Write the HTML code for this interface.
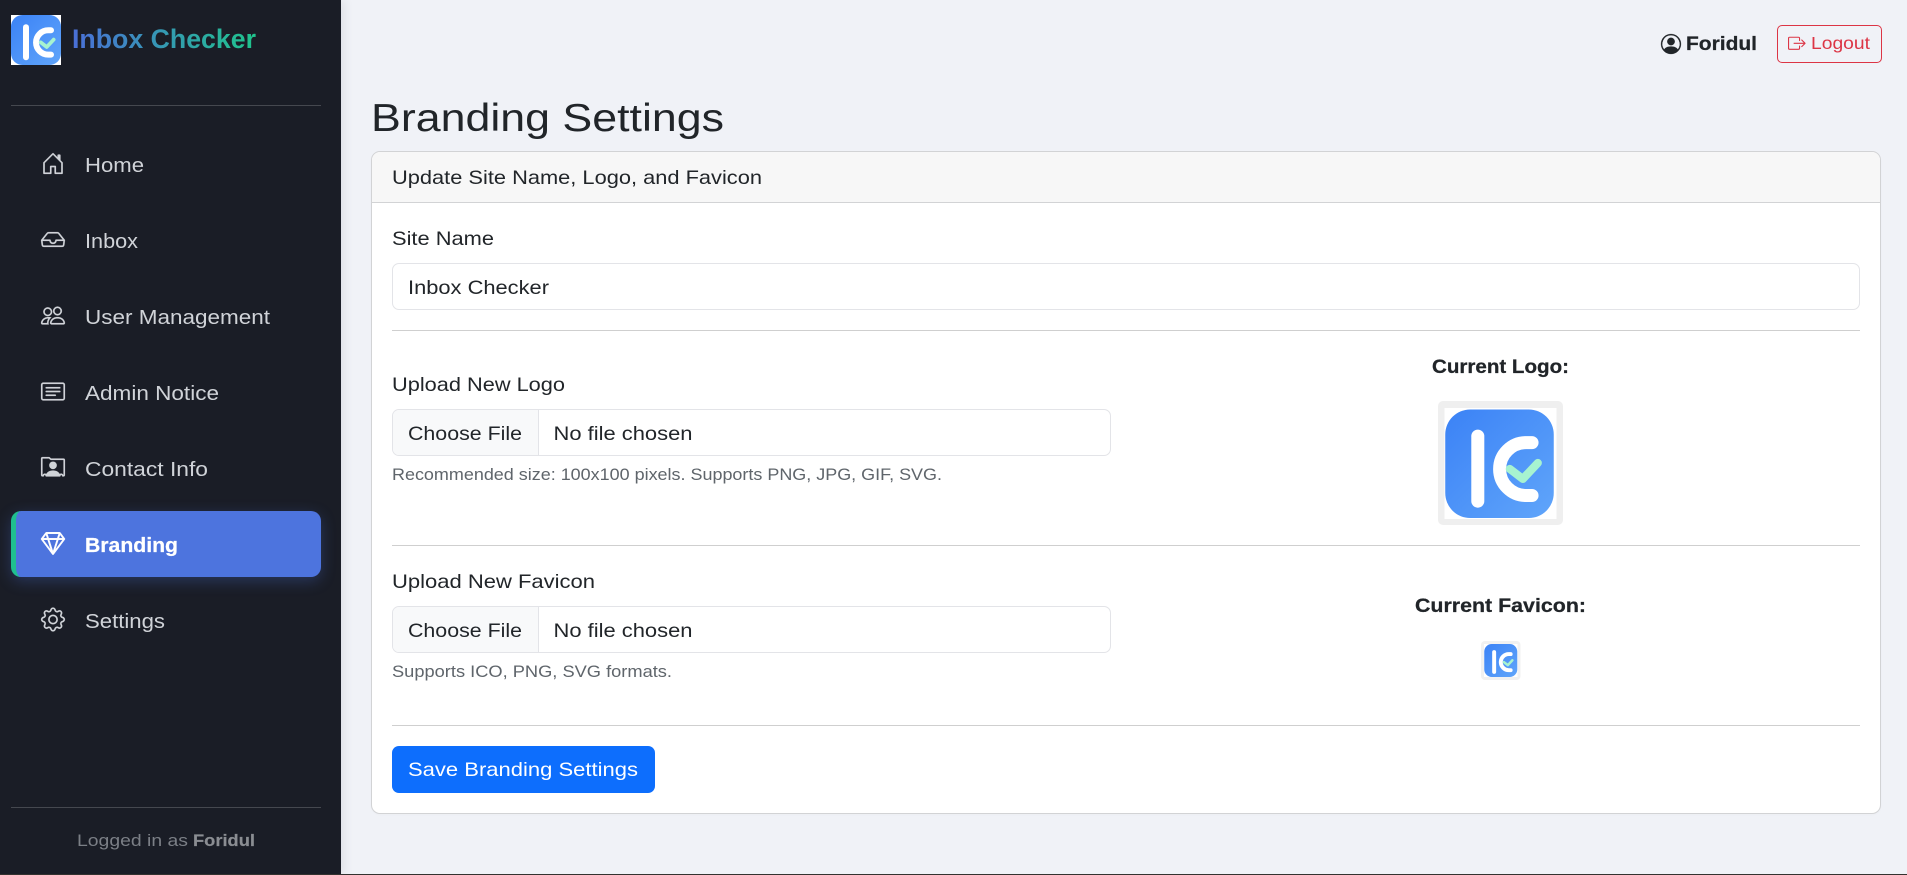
<!DOCTYPE html>
<html lang="en">
<head>
<meta charset="utf-8">
<title>Branding Settings</title>
<style>
html,body{margin:0;padding:0;width:1907px;height:875px;overflow:hidden;background:#f0f2f7;font-family:"Liberation Sans",sans-serif}
div{position:absolute;box-sizing:border-box}
#side{left:0;top:0;width:341px;height:875px;background:#1a1d26;box-shadow:3px 0 10px rgba(0,0,0,.08)}
.sh{left:11px;width:310px;height:1px;background:#45484f}
#active{left:11px;top:511px;width:310px;height:66px;background:#4d74de;border-left:5px solid #1fc08f;border-radius:10px;box-shadow:0 4px 15px rgba(77,116,222,.3)}
#logout{left:1777px;top:25px;width:105px;height:37.5px;border:1px solid #dc3545;border-radius:5px}
#card{left:371px;top:151px;width:1510px;height:663px;background:#fff;border:1px solid #d2d3d5;border-radius:9px;box-shadow:0 1px 2px rgba(0,0,0,.02)}
#chead{left:0;top:0;width:1508px;height:51px;background:#f7f7f7;border-bottom:1px solid #d2d3d5;border-radius:8px 8px 0 0}
.hr{left:392px;width:1468px;height:1px;background:#cfcfcf}
.inp{background:#fff;border:1px solid #e3e4e8;border-radius:7px}
.fb{left:0;top:0;width:146px;height:100%;background:#f8f9fa;border-right:1px solid #e3e4e8;border-radius:6px 0 0 6px}
#save{left:392px;top:746px;width:263px;height:47px;background:#0d6efd;border-radius:7px}
#ln{left:0;top:874px;width:1907px;height:1px;background:#33322f}
svg{position:absolute;left:0;top:0}
text{font-family:"Liberation Sans",sans-serif}
</style>
</head>
<body>
<div id="side"></div>
<div class="sh" style="top:105px"></div>
<div class="sh" style="top:807px"></div>
<div id="active"></div>
<div id="logout"></div>
<div id="card"><div id="chead"></div></div>
<div class="inp" style="left:392px;top:263px;width:1468px;height:47px"></div>
<div class="hr" style="top:330px"></div>
<div class="inp" style="left:392px;top:409px;width:719px;height:47px"><div class="fb"></div></div>
<div class="hr" style="top:545px"></div>
<div class="inp" style="left:392px;top:606px;width:719px;height:47px"><div class="fb"></div></div>
<div class="hr" style="top:725px"></div>
<div id="save"></div>
<div id="ln"></div>

<svg width="1907" height="875" viewBox="0 0 1907 875" xmlns="http://www.w3.org/2000/svg">
<defs>
<linearGradient id="tg" gradientUnits="userSpaceOnUse" x1="72" y1="0" x2="256" y2="0"><stop offset="0" stop-color="#4a6fd8"/><stop offset="1" stop-color="#1fc48c"/></linearGradient>
<linearGradient id="lg" x1="0" y1="0" x2="1" y2="1"><stop offset="0" stop-color="#3b82f6"/><stop offset="1" stop-color="#60a5fa"/></linearGradient>
<symbol id="logo" viewBox="0 0 100 100">
<rect width="100" height="100" rx="23" fill="url(#lg)"/>
<path d="M30 24.500V84.500" stroke="#fff" stroke-width="12" stroke-linecap="round" fill="none"/>
<path d="M80 30.500H74.500A24.400 24.400 0 0 0 74.500 79.300H80" stroke="#fff" stroke-width="12" stroke-linecap="round" fill="none"/>
<path d="M59.500 54.800L71.500 64L85.300 49.300" stroke="#a7f3d0" stroke-width="7.500" stroke-linecap="round" stroke-linejoin="round" fill="none"/>
</symbol>
</defs>

<!-- brand -->
<rect x="11" y="15" width="50" height="50" fill="#fff"/>
<use href="#logo" x="11" y="15" width="50" height="50"/>
<text x="72" y="48" font-size="26.500" font-weight="700" fill="url(#tg)" textLength="184" lengthAdjust="spacingAndGlyphs">Inbox Checker</text>

<!-- nav icons -->
<g fill="#d0d3d8" stroke="#d0d3d8" stroke-width=".12">
<g transform="translate(41,151.500) scale(1.500)"><path d="M8.354 1.146a.5.5 0 0 0-.708 0l-6 6A.5.5 0 0 0 1.500 7.500v7a.5.5 0 0 0 .5.5h4.500a.5.5 0 0 0 .5-.5v-4h2v4a.5.5 0 0 0 .5.5H14a.5.5 0 0 0 .5-.5v-7a.5.5 0 0 0-.146-.354L13 5.793V2.500a.5.5 0 0 0-.5-.5h-1a.5.5 0 0 0-.5.5v1.293L8.354 1.146zM2.500 14V7.707l5.500-5.500 5.500 5.500V14H10v-4a.5.5 0 0 0-.5-.5h-3a.5.5 0 0 0-.5.5v4H2.500z"/></g>
<g transform="translate(41,227.500) scale(1.500)"><path d="M4.980 4a.5.5 0 0 0-.39.188L1.540 8H6a.5.5 0 0 1 .5.5 1.500 1.500 0 1 0 3 0A.5.5 0 0 1 10 8h4.460l-3.050-3.812A.5.5 0 0 0 11.020 4H4.980zm9.954 5H10.450a2.500 2.500 0 0 1-4.900 0H1.066l.32 2.562a.5.5 0 0 0 .497.438h12.234a.5.5 0 0 0 .496-.438L14.933 9zM3.809 3.563A1.500 1.500 0 0 1 4.981 3h6.038a1.500 1.500 0 0 1 1.172.563l3.700 4.625a.5.5 0 0 1 .105.374l-.39 3.124A1.500 1.500 0 0 1 14.117 13H1.883a1.500 1.500 0 0 1-1.489-1.314l-.39-3.124a.5.5 0 0 1 .106-.374l3.700-4.625z"/></g>
<g transform="translate(41,303.500) scale(1.500)"><path d="M15 14s1 0 1-1-1-4-5-4-5 3-5 4 1 1 1 1h8Zm-7.978-1A.261.261 0 0 1 7 12.996c.001-.264.167-1.030.76-1.720C8.312 10.629 9.282 10 11 10c1.717 0 2.687.63 3.240 1.276.593.69.758 1.457.76 1.720l-.008.002a.274.274 0 0 1-.014.002H7.022ZM11 7a2 2 0 1 0 0-4 2 2 0 0 0 0 4Zm3-2a3 3 0 1 1-6 0 3 3 0 0 1 6 0ZM6.936 9.280a5.880 5.880 0 0 0-1.230-.247A7.350 7.350 0 0 0 5 9c-4 0-5 3-5 4 0 .667.333 1 1 1h4.216A2.238 2.238 0 0 1 5 13c0-1.010.377-2.042 1.090-2.904.243-.294.526-.569.846-.816ZM4.920 10A5.493 5.493 0 0 0 4 13H1c0-.26.164-1.030.76-1.724.545-.636 1.492-1.256 3.160-1.275ZM1.500 5.500a3 3 0 1 1 6 0 3 3 0 0 1-6 0Zm3-2a2 2 0 1 0 0 4 2 2 0 0 0 0-4Z"/></g>
<g transform="translate(41,379.500) scale(1.500)"><path d="M14.500 3a.5.5 0 0 1 .5.5v9a.5.5 0 0 1-.5.5h-13a.5.5 0 0 1-.5-.5v-9a.5.5 0 0 1 .5-.5h13zm-13-1A1.500 1.500 0 0 0 0 3.500v9A1.500 1.500 0 0 0 1.500 14h13a1.500 1.500 0 0 0 1.500-1.500v-9A1.500 1.500 0 0 0 14.500 2h-13z"/><path d="M3 5.500a.5.5 0 0 1 .5-.5h9a.5.5 0 0 1 0 1h-9a.5.5 0 0 1-.5-.5zM3 8a.5.5 0 0 1 .5-.5h9a.5.5 0 0 1 0 1h-9A.5.5 0 0 1 3 8zm0 2.500a.5.5 0 0 1 .5-.5h6a.5.5 0 0 1 0 1h-6a.5.5 0 0 1-.5-.5z"/></g>
<g transform="translate(41,455.500) scale(1.500)"><path d="M8 9.050a2.500 2.500 0 1 0 0-5 2.500 2.500 0 0 0 0 5Z"/><path d="M1 1a1 1 0 0 0-1 1v11a1 1 0 0 0 1 1h.5a.5.5 0 0 0 .5-.5.5.5 0 0 1 1 0 .5.5 0 0 0 .5.5h9a.5.5 0 0 0 .5-.5.5.5 0 0 1 1 0 .5.5 0 0 0 .5.5h.5a1 1 0 0 0 1-1V3a1 1 0 0 0-1-1H6.707L6 1.293A1 1 0 0 0 5.293 1H1Zm0 1h4.293L6 2.707A1 1 0 0 0 6.707 3H15v10h-.085a1.500 1.500 0 0 0-2.400-.63C11.885 11.223 10.554 10 8 10c-2.555 0-3.886 1.224-4.514 2.370a1.500 1.500 0 0 0-2.400.63H1V2Z"/></g>
<g transform="translate(41,531.500) scale(1.500)" fill="#fff" stroke="#fff" stroke-width=".3"><path d="M3.100.7a.5.5 0 0 1 .4-.2h9a.5.5 0 0 1 .4.2l2.976 3.974c.149.185.156.45.01.644L8.400 15.300a.5.5 0 0 1-.8 0L.1 5.300a.5.5 0 0 1 0-.6l3-4zm11.386 3.785-1.806-2.410-.776 2.413 2.582-.003zm-3.633.004.961-2.989H4.186l.963 2.995 5.704-.006zM5.470 5.495 8 13.366l2.532-7.876-5.062.005zm-1.371-.999-.78-2.422-1.818 2.425 2.598-.003zM1.499 5.500l5.113 6.817-2.192-6.820L1.500 5.500zm7.889 6.817 5.123-6.830-2.928.002-2.195 6.828z"/></g>
<g transform="translate(41,607.500) scale(1.500)"><path d="M8 4.754a3.246 3.246 0 1 0 0 6.492 3.246 3.246 0 0 0 0-6.492zM5.754 8a2.246 2.246 0 1 1 4.492 0 2.246 2.246 0 0 1-4.492 0z"/><path d="M9.796 1.343c-.527-1.790-3.065-1.790-3.592 0l-.094.319a.873.873 0 0 1-1.255.52l-.292-.16c-1.640-.892-3.433.902-2.540 2.541l.159.292a.873.873 0 0 1-.52 1.255l-.319.094c-1.790.527-1.790 3.065 0 3.592l.319.094a.873.873 0 0 1 .52 1.255l-.16.292c-.892 1.640.901 3.434 2.541 2.540l.292-.159a.873.873 0 0 1 1.255.52l.094.319c.527 1.790 3.065 1.790 3.592 0l.094-.319a.873.873 0 0 1 1.255-.52l.292.16c1.640.893 3.434-.902 2.540-2.541l-.159-.292a.873.873 0 0 1 .52-1.255l.319-.094c1.790-.527 1.790-3.065 0-3.592l-.319-.094a.873.873 0 0 1-.52-1.255l.16-.292c.893-1.640-.902-3.433-2.541-2.540l-.292.159a.873.873 0 0 1-1.255-.52l-.094-.319zm-2.633.283c.246-.835 1.428-.835 1.674 0l.094.319a1.873 1.873 0 0 0 2.693 1.115l.291-.16c.764-.415 1.600.42 1.184 1.185l-.159.292a1.873 1.873 0 0 0 1.116 2.692l.318.094c.835.246.835 1.428 0 1.674l-.319.094a1.873 1.873 0 0 0-1.115 2.693l.16.291c.415.764-.42 1.600-1.185 1.184l-.291-.159a1.873 1.873 0 0 0-2.693 1.116l-.094.318c-.246.835-1.428.835-1.674 0l-.094-.319a1.873 1.873 0 0 0-2.692-1.115l-.292.16c-.764.415-1.600-.42-1.184-1.185l.159-.291A1.873 1.873 0 0 0 1.945 8.930l-.319-.094c-.835-.246-.835-1.428 0-1.674l.319-.094A1.873 1.873 0 0 0 3.060 4.377l-.16-.292c-.415-.764.42-1.600 1.185-1.184l.292.159a1.873 1.873 0 0 0 2.692-1.115l.094-.319z"/></g>
</g>

<!-- nav labels -->
<g font-size="20" fill="#d0d3d8">
<text x="85" y="172" textLength="59" lengthAdjust="spacingAndGlyphs">Home</text>
<text x="85" y="248" textLength="53" lengthAdjust="spacingAndGlyphs">Inbox</text>
<text x="85" y="324" textLength="185" lengthAdjust="spacingAndGlyphs">User Management</text>
<text x="85" y="400" textLength="134" lengthAdjust="spacingAndGlyphs">Admin Notice</text>
<text x="85" y="476" textLength="123" lengthAdjust="spacingAndGlyphs">Contact Info</text>
<text x="85" y="552" textLength="93" lengthAdjust="spacingAndGlyphs" font-weight="700" fill="#fff" stroke="#fff" stroke-width=".25">Branding</text>
<text x="85" y="628" textLength="80" lengthAdjust="spacingAndGlyphs">Settings</text>
</g>

<text x="77" y="846" font-size="17" fill="#7b7f86" textLength="111" lengthAdjust="spacingAndGlyphs">Logged in as</text>
<text x="193" y="846" font-size="17" font-weight="700" fill="#8a8d92" stroke="#8a8d92" stroke-width=".2" textLength="62" lengthAdjust="spacingAndGlyphs">Foridul</text>

<!-- top bar -->
<g transform="translate(1661,34) scale(1.250)" fill="#212529" stroke="#212529" stroke-width=".2"><path d="M11 6a3 3 0 1 1-6 0 3 3 0 0 1 6 0z"/><path d="M0 8a8 8 0 1 1 16 0A8 8 0 0 1 0 8zm8-7a7 7 0 0 0-5.468 11.370C3.242 11.226 4.805 10 8 10s4.757 1.225 5.468 2.370A7 7 0 0 0 8 1z"/></g>
<text x="1686" y="50" font-size="19.500" font-weight="700" fill="#212529" stroke="#212529" stroke-width=".25" textLength="71" lengthAdjust="spacingAndGlyphs">Foridul</text>
<g transform="translate(1788,34.500) scale(1.100)" fill="#dc3545"><path d="M10 12.500a.5.5 0 0 1-.5.5h-8a.5.5 0 0 1-.5-.5v-9a.5.5 0 0 1 .5-.5h8a.5.5 0 0 1 .5.5v2a.5.5 0 0 0 1 0v-2A1.500 1.500 0 0 0 9.500 2h-8A1.500 1.500 0 0 0 0 3.500v9A1.500 1.500 0 0 0 1.500 14h8a1.500 1.500 0 0 0 1.500-1.500v-2a.5.5 0 0 0-1 0v2z"/><path d="M15.854 8.354a.5.5 0 0 0 0-.708l-3-3a.5.5 0 0 0-.708.708L14.293 7.500H5.500a.5.5 0 0 0 0 1h8.793l-2.147 2.146a.5.5 0 0 0 .708.708l3-3z"/></g>
<text x="1811" y="49" font-size="17.500" fill="#dc3545" textLength="59" lengthAdjust="spacingAndGlyphs">Logout</text>

<!-- heading -->
<text x="371" y="131" font-size="39" fill="#212529" textLength="353" lengthAdjust="spacingAndGlyphs">Branding Settings</text>

<!-- form text -->
<g font-size="19.500" fill="#212529">
<text x="392" y="184" textLength="370" lengthAdjust="spacingAndGlyphs">Update Site Name, Logo, and Favicon</text>
<text x="392" y="245" textLength="102" lengthAdjust="spacingAndGlyphs">Site Name</text>
<text x="408" y="294" textLength="141" lengthAdjust="spacingAndGlyphs">Inbox Checker</text>
<text x="392" y="391" textLength="173" lengthAdjust="spacingAndGlyphs">Upload New Logo</text>
<text x="408" y="440" textLength="114" lengthAdjust="spacingAndGlyphs">Choose File</text>
<text x="553.500" y="440" textLength="139" lengthAdjust="spacingAndGlyphs">No file chosen</text>
<text x="392" y="588" textLength="203" lengthAdjust="spacingAndGlyphs">Upload New Favicon</text>
<text x="408" y="637" textLength="114" lengthAdjust="spacingAndGlyphs">Choose File</text>
<text x="553.500" y="637" textLength="139" lengthAdjust="spacingAndGlyphs">No file chosen</text>
</g>
<g font-size="16.800" fill="#5f656b">
<text x="392" y="480" textLength="550" lengthAdjust="spacingAndGlyphs">Recommended size: 100x100 pixels. Supports PNG, JPG, GIF, SVG.</text>
<text x="392" y="677" textLength="280" lengthAdjust="spacingAndGlyphs">Supports ICO, PNG, SVG formats.</text>
</g>
<text x="408" y="776" font-size="19.500" fill="#fff" textLength="230" lengthAdjust="spacingAndGlyphs">Save Branding Settings</text>

<!-- right column -->
<g font-size="19.500" font-weight="700" fill="#212529" stroke="#212529" stroke-width=".25">
<text x="1432" y="373" textLength="137" lengthAdjust="spacingAndGlyphs">Current Logo:</text>
<text x="1415" y="612" textLength="171" lengthAdjust="spacingAndGlyphs">Current Favicon:</text>
</g>
<rect x="1438" y="401" width="125" height="124" rx="5" fill="#efefef"/>
<rect x="1444.500" y="408" width="112" height="111" fill="#fff"/>
<use href="#logo" x="1445" y="409.500" width="109" height="108.500"/>
<rect x="1481" y="641" width="39.500" height="39" rx="4" fill="#f1f1f1"/>
<rect x="1484" y="644" width="33.500" height="33" fill="#fff"/>
<use href="#logo" x="1484" y="644" width="33.500" height="33"/>
</svg>
</body>
</html>
